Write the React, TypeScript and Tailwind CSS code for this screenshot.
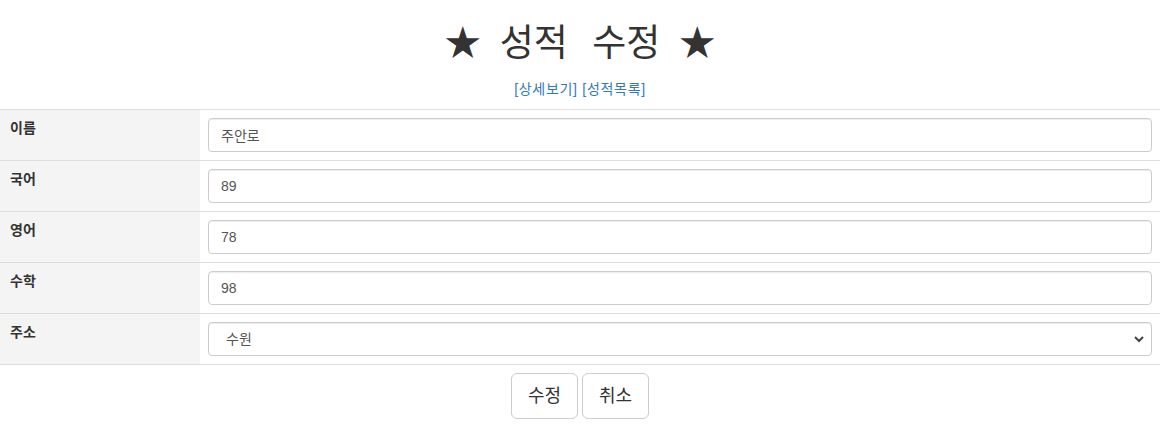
import React from "react";

const rows = [
  { label: "이름", value: "주안로" },
  { label: "국어", value: "89" },
  { label: "영어", value: "78" },
  { label: "수학", value: "98" },
];

export default function App() {
  return (
    <div className="w-[1170px] h-[436px] bg-white text-[#333] text-[14px] leading-[20px] font-['Liberation_Sans','Noto_Sans_CJK_KR',sans-serif]">
      <div className="w-[1160px]">
        <h1 className="pt-[22px] mb-[10px] h-[66px] flex justify-center items-center gap-[19px] text-[36px] leading-[44px] font-normal text-[#333]">
          <span>★</span>
          <span className="text-[37px] [word-spacing:14px]">성적 수정</span>
          <span>★</span>
        </h1>
        <div className="text-center h-[33px] pt-[3px] tracking-[0.7px]">
          <a className="text-[#337ab7]">[상세보기]</a>{" "}
          <a className="text-[#337ab7]">[성적목록]</a>
        </div>
        <table className="w-[1160px] border-collapse">
          <tbody>
            {rows.map((r) => (
              <tr key={r.label} className="border-t border-[#ddd]">
                <th className="w-[200px] bg-[#f4f4f4] p-[8px] pl-[10px] align-top text-left font-bold">
                  {r.label}
                </th>
                <td className="p-[8px]">
                  <input
                    readOnly
                    value={r.value}
                    className="block w-full h-[34px] px-[12px] py-[6px] border border-[#ccc] rounded-[4px] text-[#555] text-[14px] outline-none shadow-[inset_0_1px_1px_rgba(0,0,0,0.075)]"
                  />
                </td>
              </tr>
            ))}
            <tr className="border-t border-b border-[#ddd]">
              <th className="w-[200px] bg-[#f4f4f4] p-[8px] pl-[10px] align-top text-left font-bold">
                주소
              </th>
              <td className="p-[8px]">
                <div className="relative h-[34px] w-full border border-[#ccc] rounded-[4px] shadow-[inset_0_1px_1px_rgba(0,0,0,0.075)]">
                  <div className="px-[17px] py-[6px] text-[#555]">수원</div>
                  <svg
                    className="absolute right-[7px] top-[12px]"
                    width="10"
                    height="8"
                    viewBox="0 0 10 8"
                  >
                    <path d="M1 2 L5 6 L9 2" stroke="#444" strokeWidth="2" fill="none" />
                  </svg>
                </div>
              </td>
            </tr>
            <tr>
              <td colSpan={2} className="p-[8px] text-center">
                <button className="h-[46px] px-[16px] border border-[#ccc] rounded-[6px] bg-white text-[18px] text-[#333]">
                  수정
                </button>{" "}
                <button className="h-[46px] px-[16px] border border-[#ccc] rounded-[6px] bg-white text-[18px] text-[#333]">
                  취소
                </button>
              </td>
            </tr>
          </tbody>
        </table>
      </div>
    </div>
  );
}
